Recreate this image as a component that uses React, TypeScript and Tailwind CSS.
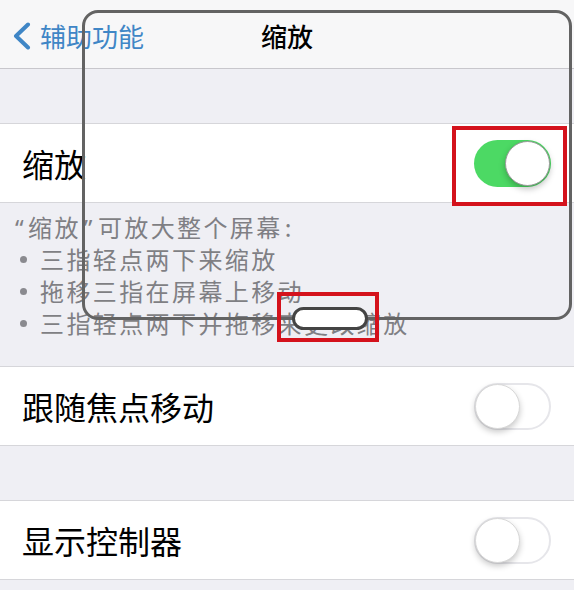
import React from "react";

function Toggle({ on }: { on: boolean }) {
  if (on) {
    return (
      <div className="w-[77px] h-[47px] rounded-full bg-[#4cd964] flex items-center justify-end p-[1px]">
        <div className="w-[45px] h-[45px] rounded-full bg-white border border-[#9a9a9a] shadow-[0_3px_6px_rgba(0,0,0,0.25)]" />
      </div>
    );
  }
  return (
    <div className="w-[77px] h-[47px] rounded-full bg-white border-2 border-[#e6e6ea] flex items-center justify-start">
      <div className="-ml-[1px] w-[45px] h-[45px] rounded-full bg-white border border-[#d8d8d8] shadow-[0_3px_6px_rgba(0,0,0,0.22)]" />
    </div>
  );
}

function Row({ label, on }: { label: string; on: boolean }) {
  return (
    <div className="h-[80px] bg-white border-t border-b border-[#d6d6da] flex items-center justify-between pl-[22px] pr-[23px]">
      <span className="text-[32px] leading-none text-black">{label}</span>
      <Toggle on={on} />
    </div>
  );
}

function Bullet({ text }: { text: string }) {
  return (
    <div className="flex items-center h-[32px]">
      <span className="w-[7px] h-[7px] rounded-full bg-[#8a8a8f] ml-[1px] mr-[13px]" />
      <span>{text}</span>
    </div>
  );
}

const latin = { fontFamily: '"Noto Sans", sans-serif' };

export default function App() {
  const font = {
    fontFamily: '"Noto Sans CJK SC", "Noto Sans", sans-serif',
  };
  return (
    <div
      className="relative w-[574px] h-[590px] overflow-hidden bg-[#efeff4]"
      style={font}
    >
      {/* Nav bar */}
      <div className="h-[69px] bg-[#f7f7f8] border-b border-[#c8c7cc] grid grid-cols-[1fr_auto_1fr] items-center pt-[4px]">
        <div className="flex items-center pl-[12px] gap-[9px] text-[#3f86c6]">
          <svg width="19" height="28" viewBox="0 0 19 28" fill="none">
            <path
              d="M16 2.5 L4 14 L16 25.5"
              stroke="#3f86c6"
              strokeWidth="4"
              strokeLinecap="round"
              strokeLinejoin="round"
            />
          </svg>
          <span className="text-[26px] leading-none">辅助功能</span>
        </div>
        <span className="text-[26px] leading-none font-medium text-black">缩放</span>
        <div />
      </div>

      <div className="h-[54px]" />

      <Row label="缩放" on={true} />

      <div className="pl-[19px] pt-[8px] pb-[8px] h-[163px] text-[24px] leading-[32px] tracking-[2.4px] text-[#7f7f84]">
        <div className="-ml-[4px] h-[32px]">
          <span style={latin} className="mr-[2px]">“</span>缩放<span style={latin} className="ml-[3px] mr-[3px]">”</span>可放大整个屏幕<span className="ml-[2px]">:</span>
        </div>
        <Bullet text="三指轻点两下来缩放" />
        <Bullet text="拖移三指在屏幕上移动" />
        <Bullet text="三指轻点两下并拖移来更改缩放" />
      </div>

      <Row label="跟随焦点移动" on={false} />

      <div className="h-[54px]" />

      <Row label="显示控制器" on={false} />

      {/* Zoom window overlay */}
      <div className="absolute left-[82px] top-[10px] w-[490px] h-[310px] rounded-[16px] border-[3px] border-[#636363]" />

      {/* Handle */}
      <div className="absolute left-[292px] top-[307px] w-[76px] h-[23px] rounded-full bg-white border-[3px] border-[#444]" />

      {/* Red highlight boxes */}
      <div className="absolute left-[452px] top-[126px] w-[115px] h-[80px] border-[4px] border-[#d4121c]" />
      <div className="absolute left-[277px] top-[292px] w-[102px] h-[50px] border-[4px] border-[#d4121c]" />
    </div>
  );
}
